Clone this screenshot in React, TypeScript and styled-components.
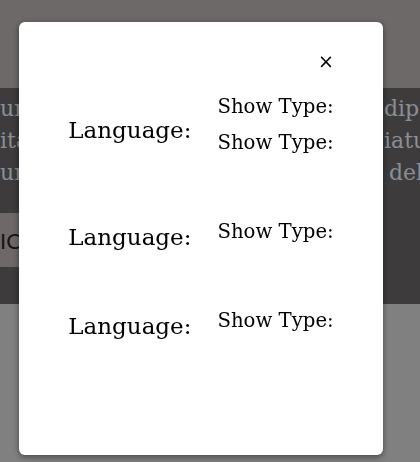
import React from "react";
import styled, { createGlobalStyle } from "styled-components";

const Global = createGlobalStyle`
  html, body { margin: 0; padding: 0; }
  body { width: 420px; height: 462px; overflow: hidden; background: #808080; }
`;

const Page = styled.div`
  display: flex;
  flex-direction: column;
  height: 462px;
  background: #808080;
`;

const Header = styled.div`
  height: 88px;
  background: #6e6969;
`;

const Band = styled.div`
  height: 216px;
  background: #3d3b3b;
  display: flex;
  flex-direction: column;
  padding-top: 5px;
  box-sizing: border-box;
  overflow: hidden;
`;

const TextLine = styled.div<{ $start: number }>`
  display: grid;
  grid-template-columns: ${(p) => p.$start}px 1fr;
  font-family: "DejaVu Serif", serif;
  font-size: 22px;
  line-height: 32px;
  color: #8a8f95;
  white-space: nowrap;
  overflow: hidden;
  & > span { overflow: hidden; }
`;

const BandButton = styled.button`
  align-self: flex-start;
  margin-top: 24px;
  height: 54px;
  width: 19px;
  border: none;
  padding: 0;
  background: #6e6868;
  color: #151515;
  font-family: "Lato", sans-serif;
  font-size: 22px;
  text-align: left;
  overflow: hidden;
  white-space: nowrap;
`;

const Overlay = styled.div`
  position: fixed;
  inset: 0;
  padding: 22px 0 0 19px;
  box-sizing: border-box;
`;

const Modal = styled.div`
  width: 364px;
  height: 433px;
  background: #ffffff;
  border-radius: 6px;
  box-shadow: 0 2px 6px rgba(0, 0, 0, 0.45);
  box-sizing: border-box;
  padding: 30px 51px 0;
  display: flex;
  flex-direction: column;
`;

const CloseRow = styled.div`
  display: flex;
  justify-content: flex-end;
`;

const CloseButton = styled.button`
  border: none;
  background: none;
  padding: 0;
  margin-right: -2px;
  font-family: "DejaVu Sans", sans-serif;
  font-size: 19px;
  line-height: 18px;
  color: #000;
  cursor: pointer;
`;

const Rows = styled.div`
  display: flex;
  flex-direction: column;
  gap: 43px;
  margin-top: 19px;
`;

const Row = styled.div`
  display: flex;
  align-items: center;
  justify-content: center;
  gap: 26px;
`;

const LangLabel = styled.label`
  font-family: "DejaVu Serif", serif;
  font-size: 23px;
  line-height: 36px;
  color: #000;
  white-space: nowrap;
`;

const TypeColumn = styled.div`
  display: flex;
  flex-direction: column;
  padding-bottom: 10px;
`;

const TypeLabel = styled.label`
  font-family: "DejaVu Serif", serif;
  font-size: 19.7px;
  line-height: 36px;
  color: #000;
  white-space: nowrap;
`;

const rows = [2, 1, 1];

export default function App() {
  return (
    <>
      <Global />
      <Page>
        <Header />
        <Band>
          <TextLine $start={384}>
            <span>unt in culpa qui officia deserunt</span>
            <span>dipiscing elit</span>
          </TextLine>
          <TextLine $start={384}>
            <span>itation ullamco laboris nisi</span>
            <span>iatur sint</span>
          </TextLine>
          <TextLine $start={389}>
            <span>ure dolor in reprehenderit</span>
            <span>deleniti</span>
          </TextLine>
          <BandButton>IC</BandButton>
        </Band>
      </Page>
      <Overlay>
        <Modal>
          <CloseRow>
            <CloseButton aria-label="Close">×</CloseButton>
          </CloseRow>
          <Rows>
            {rows.map((n, i) => (
              <Row key={i}>
                <LangLabel>Language:</LangLabel>
                <TypeColumn>
                  {Array.from({ length: n }).map((_, j) => (
                    <TypeLabel key={j}>Show Type:</TypeLabel>
                  ))}
                </TypeColumn>
              </Row>
            ))}
          </Rows>
        </Modal>
      </Overlay>
    </>
  );
}
